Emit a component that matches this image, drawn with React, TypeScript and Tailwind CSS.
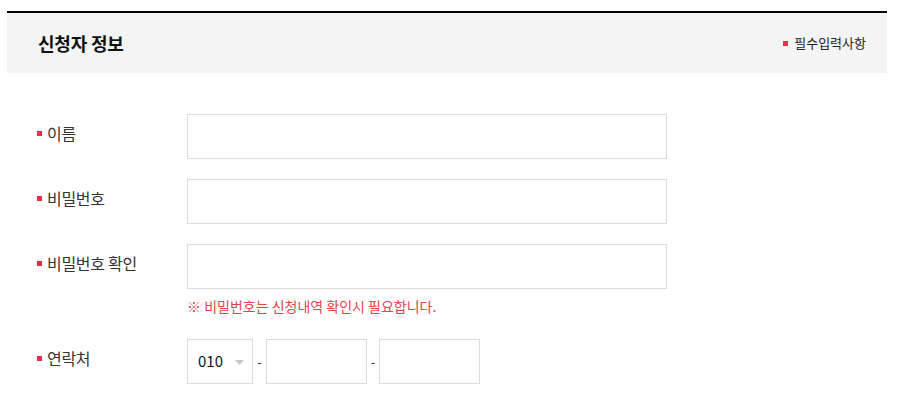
import React from "react";

const font = { fontFamily: '"Noto Sans CJK KR", "Noto Sans", sans-serif' };

function Label({ children }: { children: React.ReactNode }) {
  return (
    <div className="flex w-[150px] shrink-0 items-center gap-[5px] pt-[8px] text-[16px] leading-[22px] tracking-[-0.3px] text-[#333]">
      <span className="h-[5px] w-[5px] bg-[#ec2d4a]" />
      <span>{children}</span>
    </div>
  );
}

function TextInput({ type = "text", className = "w-[480px]" }: { type?: string; className?: string }) {
  return (
    <input
      type={type}
      className={`h-[45px] border border-[#dcdcdc] bg-white px-3 text-[14px] outline-none ${className}`}
    />
  );
}

export default function App() {
  return (
    <div className="min-h-[402px] bg-white pl-[7px] pt-[11px]" style={font}>
      <section className="w-[880px] border-t-2 border-black">
        <div className="flex h-[60px] items-center justify-between bg-[#f4f4f4] pl-[31px] pr-[21px]">
          <h2 className="text-[18px] font-bold tracking-[-0.2px] text-[#111]">신청자 정보</h2>
          <p className="flex items-center gap-[6px] text-[13px] text-[#222]">
            <span className="h-[5px] w-[5px] bg-[#ec2d4a]" />
            필수입력사항
          </p>
        </div>

        <div className="flex flex-col gap-[20px] pl-[30px] pt-[41px]">
          <div className="flex items-start">
            <Label>이름</Label>
            <TextInput />
          </div>
          <div className="flex items-start">
            <Label>비밀번호</Label>
            <TextInput type="password" />
          </div>
          <div className="flex items-start">
            <Label>비밀번호 확인</Label>
            <div className="flex flex-col">
              <TextInput type="password" />
              <p className="mb-[4px] mt-[8px] text-[14px] leading-[18px] text-[#e5434f]">
                ※ 비밀번호는 신청내역 확인시 필요합니다.
              </p>
            </div>
          </div>
          <div className="flex items-start">
            <Label>연락처</Label>
            <div className="flex items-center">
              <div className="relative flex h-[45px] w-[66px] items-center border border-[#dcdcdc] pl-[10px] text-[15px] text-[#111]">
                010
                <svg className="absolute right-[8px] top-[20px]" width="9" height="5" viewBox="0 0 9 5">
                  <path d="M0 0h9L4.5 5z" fill="#c8c8c8" />
                </svg>
              </div>
              <span className="w-[13px] text-center text-[13px] text-[#333]">-</span>
              <TextInput className="w-[101px]" />
              <span className="w-[12px] text-center text-[13px] text-[#333]">-</span>
              <TextInput className="w-[101px]" />
            </div>
          </div>
        </div>
      </section>
    </div>
  );
}
